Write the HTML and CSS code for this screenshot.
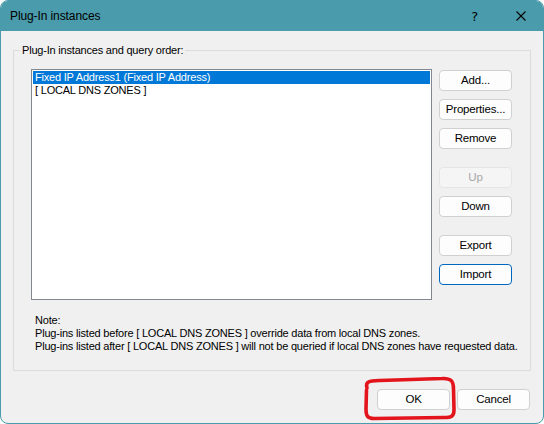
FILE: index.html
```html
<!DOCTYPE html>
<html>
<head>
<meta charset="utf-8">
<link rel="stylesheet" href="styles.css">
</head>
<body>
<div class="window">
  <div class="titlebar">
    <span class="title">Plug-In instances</span>
    <span class="help">?</span>
    <svg class="close" width="10" height="10" viewBox="0 0 10 10"><path d="M0.5 0.5 L9.5 9.5 M9.5 0.5 L0.5 9.5" stroke="#000" stroke-width="1.1" fill="none"/></svg>
  </div>
  <div class="content">
    <div class="group">
      <span class="group-label">Plug-In instances and query order:</span>
      <div class="group-row">
        <div class="listbox">
          <div class="item selected">Fixed IP Address1 (Fixed IP Address)</div>
          <div class="item">[ LOCAL DNS ZONES ]</div>
        </div>
        <div class="side-buttons">
          <button class="btn">Add...</button>
          <button class="btn">Properties...</button>
          <button class="btn">Remove</button>
          <button class="btn disabled spaced">Up</button>
          <button class="btn">Down</button>
          <button class="btn spaced">Export</button>
          <button class="btn focused">Import</button>
        </div>
      </div>
      <div class="note">
        <div>Note:</div>
        <div>Plug-ins listed before [ LOCAL DNS ZONES ] override data from local DNS zones.</div>
        <div>Plug-ins listed after [ LOCAL DNS ZONES ] will not be queried if local DNS zones have requested data.</div>
      </div>
    </div>
    <div class="footer">
      <button class="btn">OK</button>
      <button class="btn">Cancel</button>
    </div>
  </div>
  <svg class="annotation" width="544" height="424" viewBox="0 0 544 424">
    <path d="M367 388 C365 381 370 381 380 380.5 L442 378.5 C451 378 453.5 381 453.5 389 L454 410 C454 416.5 451 417.5 444 417.5 L374 418.5 C367.5 418.5 366 416 366 409 L366.5 390" fill="none" stroke="#e3141c" stroke-width="3.6" stroke-linecap="round" stroke-linejoin="round"/>
  </svg>
</div>
</body>
</html>
```

FILE: styles.css
```css
html, body {
  margin: 0;
  padding: 0;
  background: #ffffff;
}

.window {
  position: relative;
  width: 544px;
  height: 424px;
  box-sizing: border-box;
  border: 1px solid #4a9bab;
  border-radius: 8px;
  overflow: hidden;
  background: #f0f0f0;
  display: flex;
  flex-direction: column;
  font-family: "Liberation Sans", Arial, sans-serif;
  font-size: 11px;
  letter-spacing: -0.2px;
  color: #000;
}

.titlebar {
  height: 30px;
  flex: 0 0 30px;
  background: #4a9bab;
  display: flex;
  align-items: center;
  padding-left: 9px;
  padding-right: 17px;
}

.title {
  font-family: "Liberation Sans", Arial, sans-serif;
  font-size: 12px;
  letter-spacing: -0.1px;
  color: #000;
  flex: 1;
}

.help {
  font-family: "DejaVu Sans", sans-serif;
  font-size: 13px;
  margin-right: 38px;
  color: #000;
}

.close {
  display: block;
}

.content {
  flex: 1;
  display: flex;
  flex-direction: column;
  padding: 19px 12px 0 12px;
}

.group {
  border: 1px solid #dcdcdc;
  display: flex;
  flex-direction: column;
  padding: 0 17px 17px 17px;
}

.group-label {
  align-self: flex-start;
  margin: -8px 0 0 -11px;
  padding: 0 2px;
  line-height: 14px;
  background: #f0f0f0;
}

.group-row {
  display: flex;
  gap: 7px;
  margin-top: 12px;
}

.listbox {
  width: 401px;
  height: 231px;
  box-sizing: border-box;
  border: 1px solid #828790;
  background: #ffffff;
  padding: 1px;
}

.item {
  height: 13px;
  line-height: 13px;
  padding-left: 2px;
  white-space: nowrap;
}

.item.selected {
  background: #0078d7;
  color: #ffffff;
}

.side-buttons {
  display: flex;
  flex-direction: column;
  gap: 8px;
  padding-top: 1px;
}

.btn {
  width: 73px;
  height: 21px;
  box-sizing: border-box;
  border: 1px solid #d0d0d0;
  border-radius: 4px;
  background: #fdfdfd;
  font-family: "Liberation Sans", Arial, sans-serif;
  font-size: 11.5px;
  letter-spacing: -0.2px;
  color: #000;
  padding: 0;
  margin: 0;
  line-height: 19px;
  text-align: center;
}

.btn.spaced {
  margin-top: 10px;
}

.btn.disabled {
  background: #f5f5f5;
  border-color: #e5e5e5;
  color: #a8a8a8;
}

.btn.focused {
  border-color: #0067c0;
}

.note {
  margin-top: 14px;
  line-height: 13px;
  padding-left: 4px;
  white-space: nowrap;
}

.footer {
  display: flex;
  justify-content: flex-end;
  gap: 7px;
  margin-top: 18px;
  padding-right: 1px;
}

.annotation {
  position: absolute;
  left: -1px;
  top: -1px;
  pointer-events: none;
}
```
